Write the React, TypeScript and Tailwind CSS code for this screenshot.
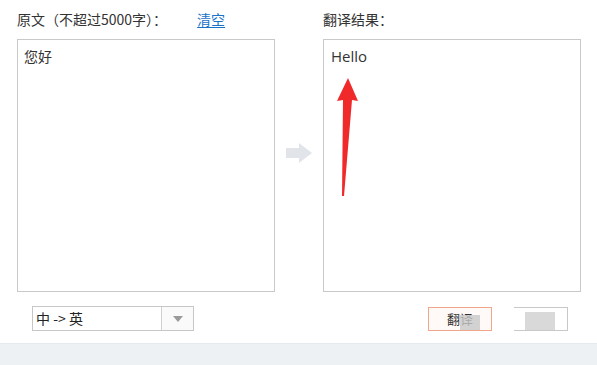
import React, { useState } from 'react'

const font = { fontFamily: '"Microsoft YaHei", "Noto Sans CJK SC", "Noto Sans", sans-serif' }

const App: React.FC = () => {
  const [source, setSource] = useState<string>('您好')
  const [lang] = useState<string>('中 -> 英')

  return (
    <div className="relative w-[597px] h-[365px] bg-white overflow-hidden text-[#333]" style={font}>
      <div className="flex pl-[17px] pt-[8px]">
        {/* source column */}
        <div className="flex flex-col w-[258px]">
          <div className="flex items-center h-[22px] text-[14px] text-[#333]">
            <span>原文（不超过5000字）：</span>
            <a className="ml-[30px] text-[#1a73c8] underline underline-offset-2 cursor-pointer" onClick={() => setSource('')}>
              清空
            </a>
          </div>
          <div className="mt-[9px] h-[253px] border border-[#c9c9c9] px-[6px] py-[6px] text-[14px] leading-[20px]">
            {source}
          </div>
        </div>

        {/* middle arrow */}
        <div className="w-[48px] flex items-center justify-center pt-[6px]">
          <svg width="28" height="22" viewBox="0 0 28 22">
            <polygon points="1,6 14,6 14,1 27,11 14,21 14,16 1,16" fill="#e1e4e9" />
          </svg>
        </div>

        {/* result column */}
        <div className="flex flex-col w-[258px]">
          <div className="flex items-center h-[22px] text-[14px] text-[#333]">翻译结果：</div>
          <div className="mt-[9px] h-[253px] border border-[#c9c9c9] px-[7px] py-[5px] text-[15px] leading-[22px] text-[#333]" style={{ fontFamily: '"Open Sans", "Noto Sans", sans-serif' }}>
            Hello
          </div>
        </div>
      </div>

      {/* bottom controls */}
      <div className="flex items-center pl-[32px] pr-[29px] mt-[14px] h-[25px]">
        <div className="flex w-[162px] h-[25px] border border-[#c6c6c6] bg-white">
          <div className="flex-1 flex items-center pl-[3px] text-[14px] text-[#222]">{lang}</div>
          <div className="w-[32px] border-l border-[#d0d0d0] bg-[#fafafa] flex items-center justify-center">
            <svg width="10" height="6" viewBox="0 0 10 6">
              <polygon points="0,0 10,0 5,6" fill="#9a9a9a" />
            </svg>
          </div>
        </div>
        <div className="flex-1" />
        <button className="w-[64px] h-[24px] border border-[#f0a68a] bg-[#fffaf7] text-[13px] text-[#333] flex items-center justify-center">
          翻译
        </button>
        <button className="ml-[22px] w-[54px] h-[24px] border border-[#c8c8c8] border-l-0 bg-white" />
      </div>

      {/* watermark blur patches */}
      <div className="absolute left-[460px] top-[315px] w-[20px] h-[15px] bg-[#c8c8c8] opacity-80" />
      <div className="absolute left-[525px] top-[312px] w-[30px] h-[18px] bg-[#cfcfcf] opacity-80" />

      {/* footer bar */}
      <div className="absolute left-0 bottom-0 w-full h-[22px] bg-[#eef1f4] border-t border-[#e6e9ed]" />

      {/* red annotation arrow */}
      <svg className="absolute left-0 top-0 pointer-events-none" width="597" height="365">
        <polygon points="348,78 358,101 352,100 344,196 342,196 343,100 337,101" fill="#f02a2a" />
      </svg>
    </div>
  )
}

export default App
